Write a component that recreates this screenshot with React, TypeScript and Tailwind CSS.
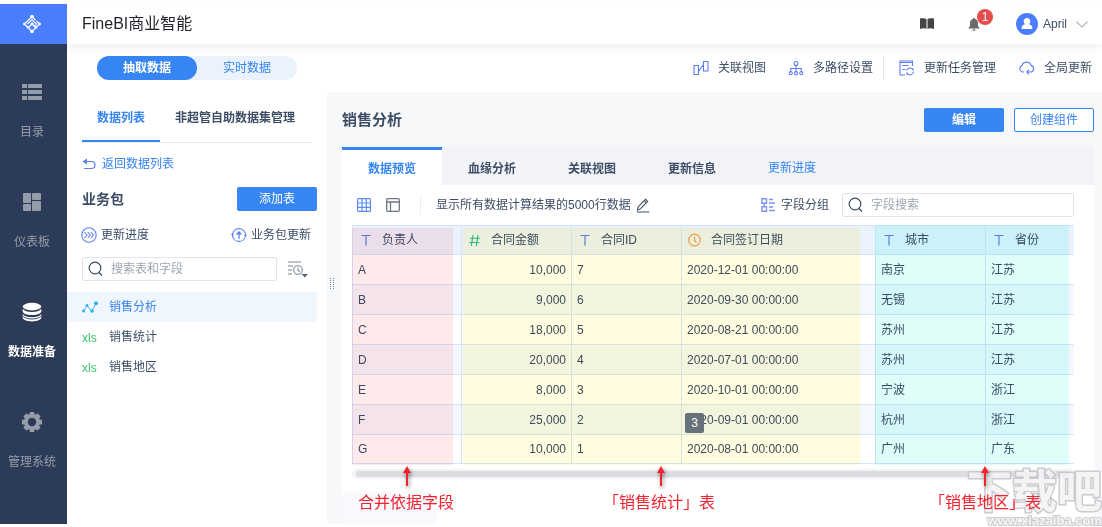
import type { ReactNode } from "react";

const navItems: { label: string; active?: boolean; icon: ReactNode }[] = [
  {
    label: "目录",
    icon: (
      <svg width="20" height="20" viewBox="0 0 20 20" fill="currentColor" aria-hidden="true">
        <path d="M0 2h5v4H0zM6 2h14v4H6zM0 8h5v4H0zM6 8h14v4H6zM0 14h5v4H0zM6 14h14v4H6z" />
      </svg>
    ),
  },
  {
    label: "仪表板",
    icon: (
      <svg width="20" height="20" viewBox="0 0 20 20" fill="currentColor" aria-hidden="true">
        <rect x="1" y="1" width="8" height="10" rx="1" />
        <rect x="10" y="1" width="9" height="7" rx="1" />
        <rect x="1" y="12" width="8" height="7" rx="1" />
        <rect x="10" y="9" width="9" height="10" rx="1" />
      </svg>
    ),
  },
  {
    label: "数据准备",
    active: true,
    icon: (
      <svg width="20" height="20" viewBox="0 0 20 20" fill="currentColor" aria-hidden="true">
        <ellipse cx="10" cy="4.6" rx="9.3" ry="3.8" />
        <path d="M.7 6.8c1.5 2.3 5 3.2 9.3 3.2s7.800-.9 9.300-3.200v2.500c0 2.200-4.200 3.800-9.300 3.800S.7 11.500.7 9.300z" />
        <path d="M.7 12c1.500 2.300 5 3.200 9.300 3.200s7.800-.9 9.300-3.200v3.500c0 2.200-4.200 3.900-9.300 3.900S.7 17.700.7 15.500z" />
        <path d="M1 14.200c2 2 5 2.800 9 2.800s7-.8 9-2.800" fill="none" stroke="#2c3b57" strokeWidth=".9" />
      </svg>
    ),
  },
  {
    label: "管理系统",
    icon: (
      <svg width="20" height="20" viewBox="0 0 20 20" aria-hidden="true">
        <g fill="currentColor">
          <circle cx="10" cy="10" r="8" />
          {[0, 45, 90, 135].map((a) => (
            <rect key={a} x="7.500" y="0" width="5" height="20" rx="1.200" transform={`rotate(${a} 10 10)`} />
          ))}
        </g>
        <circle cx="10" cy="10" r="4.200" fill="#2c3b57" />
      </svg>
    ),
  },
];

function SearchIcon() {
  return (
    <svg width="16" height="16" viewBox="0 0 16 16" fill="none" stroke="#3d4d66" strokeWidth="1.200" aria-hidden="true">
      <circle cx="7" cy="7" r="5.800" />
      <path d="M11 11.500l3 3" />
    </svg>
  );
}

function TextType() {
  return (
    <svg width="14" height="14" viewBox="0 0 14 14" fill="none" stroke="#5b7ff0" strokeWidth="1.200" aria-hidden="true">
      <path d="M2.500 2.500h9M7 2.500v10" />
    </svg>
  );
}

function NumberType() {
  return (
    <svg width="14" height="14" viewBox="0 0 14 14" fill="none" stroke="#2fb886" strokeWidth="1.100" aria-hidden="true">
      <path d="M5 2L3.300 13M10 2L8.300 13M2 5.200h10M1.300 9.500h10" />
    </svg>
  );
}

function DateType() {
  return (
    <svg width="14" height="14" viewBox="0 0 14 14" fill="none" stroke="#f5a04c" strokeWidth="1.200" aria-hidden="true">
      <circle cx="6.500" cy="7" r="5.800" />
      <path d="M6.500 3.500V7.500l2 2" />
    </svg>
  );
}

const columns: { label: string; icon: ReactNode; width: string }[] = [
  { label: "负责人", icon: <TextType />, width: "w-[109px]" },
  { label: "合同金额", icon: <NumberType />, width: "w-[110px]" },
  { label: "合同ID", icon: <TextType />, width: "w-[110px]" },
  { label: "合同签订日期", icon: <DateType />, width: "w-[194px]" },
  { label: "城市", icon: <TextType />, width: "w-[110px]" },
  { label: "省份", icon: <TextType />, width: "" },
];

const rows = [
  ["A", "10,000", "7", "2020-12-01 00:00:00", "南京", "江苏"],
  ["B", "9,000", "6", "2020-09-30 00:00:00", "无锡", "江苏"],
  ["C", "18,000", "5", "2020-08-21 00:00:00", "苏州", "江苏"],
  ["D", "20,000", "4", "2020-07-01 00:00:00", "苏州", "江苏"],
  ["E", "8,000", "3", "2020-10-01 00:00:00", "宁波", "浙江"],
  ["F", "25,000", "2", "2020-09-01 00:00:00", "杭州", "浙江"],
  ["G", "10,000", "1", "2020-08-01 00:00:00", "广州", "广东"],
];

function Callout({ text, place, arrow }: { text: string; place: string; arrow: string }) {
  return (
    <>
      <svg
        className={`absolute top-[241px] z-10 drop-shadow-[1px_2px_2px_rgba(0,0,0,0.5)] ${arrow}`}
        width="8"
        height="20"
        viewBox="0 0 8 20"
        fill="#f5222d"
        aria-hidden="true"
      >
        <path d="M4 0l4 7H5v13H3V7H0z" />
      </svg>
      <span className={`absolute top-[266px] z-10 text-base leading-6 whitespace-nowrap text-[#f5222d] ${place}`}>{text}</span>
    </>
  );
}

function Sidebar() {
  return (
    <nav className="flex w-[67px] shrink-0 flex-col bg-[#2c3b57]">
      <a href="#home" aria-label="FineBI" className="flex h-10 items-center justify-center bg-[#4b7eff] pr-[3px]">
        <svg width="20" height="20" viewBox="0 0 20 20" aria-hidden="true">
          <g fill="none" stroke="#fff" strokeWidth="1.100">
            <path d="M10 2.500L2.500 10l3 3M10 2.500l3.500 3.500M17.500 10L10 17.500 7 14.500M17.500 10l-3-3M5.500 10L10 5.500l4.500 4.500L12 12.500M10 10l-3.500 3.500M10 10l3.500 3.500" />
          </g>
          <g fill="#fff">
            <circle cx="10" cy="2.500" r="1.700" />
            <circle cx="10" cy="17.500" r="1.700" />
            <circle cx="2.500" cy="10" r="1.400" />
            <circle cx="17.500" cy="10" r="1.400" />
            <circle cx="10" cy="9.800" r="1.500" />
            <circle cx="6" cy="13.500" r="1.200" />
            <circle cx="14" cy="13.500" r="1.200" />
          </g>
        </svg>
      </a>
      {navItems.map((item) => (
        <a
          key={item.label}
          href={`#${item.label}`}
          className={`flex h-[110px] flex-col items-center gap-5 pt-[38px] pr-[3px] leading-5 whitespace-nowrap ${
            item.active ? "font-bold text-white" : "text-[#969daa]"
          }`}
        >
          {item.icon}
          {item.label}
        </a>
      ))}
    </nav>
  );
}

function Header() {
  return (
    <header className="relative z-10 flex h-10 items-center bg-white pr-[14px] pl-[15px] shadow-[0_4px_8px_rgba(60,90,80,0.08)]">
      <h1 className="grow text-base leading-6 text-[#1f2329]">FineBI商业智能</h1>
      <button aria-label="帮助文档" className="mr-[34px]">
        <svg width="14" height="12" viewBox="0 0 14 12" fill="#444" aria-hidden="true">
          <path d="M0 .5C2.500 0 5 0 6.500 1v10C5 10 2.500 10 0 11zM14 .5C11.500 0 9 0 7.500 1v10c1.500-1 4-1 6.500 0z" />
        </svg>
      </button>
      <button aria-label="消息" className="relative mr-9">
        <svg width="12" height="13" viewBox="0 0 12 13" fill="#6b6b6b" aria-hidden="true">
          <path d="M6 0c.6 0 1 .4 1 1 2 .5 3 2 3 4v3l1.500 2v.6H.5V10L2 8V5c0-2 1-3.500 3-4 0-.6.400-1 1-1zM4.500 11.200h3a1.500 1.500 0 01-3 0z" />
        </svg>
        <span className="absolute -top-[9px] left-[9px] flex size-4 items-center justify-center rounded-full bg-[#e64c4c] text-xs text-white">1</span>
      </button>
      <button className="flex items-center gap-[5px] text-[#3d4d66]">
        <svg width="22" height="22" viewBox="0 0 22 22" aria-hidden="true">
          <circle cx="11" cy="11" r="11" fill="#4b7eff" />
          <path d="M11 5c2 0 3.300 1.400 3.300 3.300 0 1.300-.6 2.300-1.300 3 2 .6 3.300 1.500 3.300 3.200V16H5.700v-1.500c0-1.700 1.300-2.600 3.300-3.200-.7-.7-1.300-1.700-1.300-3C7.700 6.400 9 5 11 5z" fill="#fff" />
        </svg>
        April
        <svg className="ml-1" width="12" height="7" viewBox="0 0 12 7" fill="none" stroke="#b5b8bd" strokeWidth="1.200" aria-hidden="true">
          <path d="M.5 .8l5.500 5.200L11.500 .8" />
        </svg>
      </button>
    </header>
  );
}

function ActionBar() {
  return (
    <div className="flex h-12 items-center pr-[10px] pl-[30px] text-[#3d4d66]">
      <div className="flex h-6 w-[200px] rounded-full bg-[#eaf2fe]">
        <button className="w-1/2 rounded-full bg-[#3685f2] font-bold text-white">抽取数据</button>
        <button className="w-1/2 text-[#3685f2]">实时数据</button>
      </div>
      <div className="flex grow items-center justify-end whitespace-nowrap">
        <button className="flex items-center gap-[9px]">
          <svg width="16" height="16" viewBox="0 0 16 16" fill="none" stroke="#5b7ff0" strokeWidth="1.100" aria-hidden="true">
            <path d="M1 5.500h4.500v9H1zM10.500 1.500H15V11h-4.500zM5.500 11.500l5-7" />
          </svg>
          关联视图
        </button>
        <button className="ml-[22px] flex items-center gap-[9px]">
          <svg width="16" height="16" viewBox="0 0 16 16" fill="none" stroke="#5b7ff0" strokeWidth="1.100" aria-hidden="true">
            <circle cx="8" cy="3.500" r="2" />
            <path d="M8 5.500v6M2.700 11.500V8.500h10.600v3" />
            <circle cx="2.700" cy="13.200" r="1.600" />
            <circle cx="8" cy="13.200" r="1.600" />
            <circle cx="13.300" cy="13.200" r="1.600" />
          </svg>
          多路径设置
        </button>
        <span className="mx-[10px] h-6 border-l border-[#e3e5e9]" />
        <button className="ml-1 flex items-center gap-[9px]">
          <svg width="17" height="16" viewBox="0 0 17 16" fill="none" stroke="#5b7ff0" strokeWidth="1.100" aria-hidden="true">
            <path d="M14.500 6V1H2v14h5M2 2.500h12.500M4.500 5.500h6M4.500 9.500H7" />
            <path d="M8.500 10.500a3.600 3.600 0 016.500-.8v-1.500M15.500 12a3.600 3.600 0 01-6.500 1.300v1.700" />
          </svg>
          更新任务管理
        </button>
        <button className="ml-[23px] flex items-center gap-[9px]">
          <svg width="16" height="16" viewBox="0 0 16 16" fill="none" stroke="#5b7ff0" strokeWidth="1.100" aria-hidden="true">
            <path d="M5 12H3.700A3.400 3.400 0 013 5.500 4.800 4.800 0 0112.200 5.600 3.300 3.300 0 0112 12H8M10 9.700L7.800 12l2.200 2.300" />
          </svg>
          全局更新
        </button>
      </div>
    </div>
  );
}

function XlsIcon() {
  return <span className="w-4 pt-[2px] text-xs leading-3 text-[#3fc46f]">xls</span>;
}

function LeftPanel() {
  const tables: { name: string; icon: ReactNode; active?: boolean }[] = [
    {
      name: "销售分析",
      active: true,
      icon: (
        <svg width="16" height="12" viewBox="0 0 16 12" aria-hidden="true">
          <path d="M1.500 10l3.500-5 5 5L14.200 2" fill="none" stroke="#3fb2ec" strokeWidth="1" />
          <g fill="#2cb5e8">
            <circle cx="1.500" cy="10" r="1.500" />
            <circle cx="5" cy="4.500" r="1.500" />
            <circle cx="10" cy="10" r="1.800" />
            <circle cx="14" cy="2.200" r="2" />
          </g>
        </svg>
      ),
    },
    { name: "销售统计", icon: <XlsIcon /> },
    { name: "销售地区", icon: <XlsIcon /> },
  ];
  return (
    <aside className="flex w-[260px] shrink-0 flex-col pr-[10px] text-[#3d4d66]">
      <div className="mr-[5px] ml-[15px] flex h-[51px] border-b border-[#e8eaed] font-bold whitespace-nowrap">
        <button className="h-[50px] border-b-2 border-[#3685f2] px-[15px] pt-1 text-[#3685f2]">数据列表</button>
        <button className="h-[50px] pt-[2px] pl-[15px]">非超管自助数据集管理</button>
      </div>
      <a href="#back" className="mt-[11px] flex items-center gap-[6px] pl-[15px] leading-5 text-[#3685f2]">
        <svg width="14" height="12" viewBox="0 0 14 12" fill="none" stroke="#5b7ff0" strokeWidth="1.200" aria-hidden="true">
          <path d="M1.500 3.500H9.500a3.400 3.400 0 010 7H2M1.500 3.500h4" />
          <path d="M5 .5v6L.5 3.500z" fill="#5b7ff0" stroke="none" />
        </svg>
        返回数据列表
      </a>
      <div className="mt-[13px] flex items-center justify-between pl-[15px]">
        <h2 className="text-sm font-bold">业务包</h2>
        <button className="h-6 w-20 rounded-[2px] bg-[#3685f2] text-white">添加表</button>
      </div>
      <div className="mt-[14px] flex items-center justify-between pr-[6px] pl-[14px] leading-5">
        <button className="flex items-center gap-1">
          <svg width="16" height="16" viewBox="0 0 16 16" fill="none" stroke="#5b7ff0" strokeWidth="1.100" aria-hidden="true">
            <circle cx="8" cy="8" r="7.200" />
            <path d="M3.500 5L6 8l-2.500 3M6.700 5l2.500 3-2.500 3M9.900 5l2.500 3-2.500 3" />
          </svg>
          更新进度
        </button>
        <button className="flex items-center gap-1">
          <svg width="16" height="16" viewBox="0 0 16 16" fill="none" stroke="#5b7ff0" strokeWidth="1.200" aria-hidden="true">
            <path d="M1.500 7A6.600 6.600 0 0114.500 7M14.500 9A6.600 6.600 0 011.500 9M8 12V5" />
            <path d="M4.700 7.500L8 4l3.300 3.500zM0 7h3L1.500 9.500zM13 9h3l-1.500-2.500z" fill="#5b7ff0" stroke="none" />
          </svg>
          业务包更新
        </button>
      </div>
      <div className="mt-3 flex items-center gap-[11px] pr-[9px] pl-[15px]">
        <label className="flex h-6 min-w-0 grow items-center gap-[7px] rounded-[2px] border border-[#e0e3e8] pl-[5px]">
          <SearchIcon />
          <input aria-label="搜索表和字段" placeholder="搜索表和字段" className="min-w-0 grow outline-none placeholder:text-[#9ea6b2]" />
        </label>
        <button aria-label="排序">
          <svg width="20" height="18" viewBox="0 0 20 18" fill="none" stroke="#7d8898" strokeWidth="1.100" aria-hidden="true">
            <path d="M0 2h13M0 6h5M0 10h4M0 14h4" />
            <circle cx="10" cy="10" r="4.300" />
            <path d="M10 7.500v3l2 1" />
            <path d="M13.500 14h6.500l-3.200 3.500z" fill="#5b6675" stroke="none" />
          </svg>
        </button>
      </div>
      <ul className="mt-[11px]">
        {tables.map((t) => (
          <li key={t.name}>
            <a
              href={`#${t.name}`}
              className={`flex h-[30px] items-center gap-[11px] pl-[15px] ${t.active ? "bg-[#f0f6fe] text-[#3685f2]" : ""}`}
            >
              {t.icon}
              {t.name}
            </a>
          </li>
        ))}
      </ul>
    </aside>
  );
}

function DataTable() {
  return (
    <div className="relative mx-[10px] mr-5">
      <table className="w-full table-fixed border-separate border-spacing-0">
        <thead>
          <tr className="h-[29px] bg-[#eaf2fe]">
            {columns.map((c) => (
              <th key={c.label} scope="col" className={`border-t border-l border-[#d6e4fa] p-0 font-normal ${c.width}`}>
                <span className="flex items-center gap-[9px] pl-[6px] whitespace-nowrap">
                  {c.icon}
                  {c.label}
                </span>
              </th>
            ))}
          </tr>
        </thead>
        <tbody>
          {rows.map((r, i) => (
            <tr key={r[0]} className={i % 2 ? "h-[30px] bg-[#f4f8fe]" : "h-[30px]"}>
              {r.map((v, j) => (
                <td
                  key={j}
                  className={`border-t border-l border-[#d6e4fa] px-[5px] py-0 whitespace-nowrap ${j === 1 ? "text-right" : ""} ${
                    i === rows.length - 1 ? "border-b" : ""
                  }`}
                >
                  {v}
                </td>
              ))}
            </tr>
          ))}
        </tbody>
      </table>
      <div className="mt-[5px] h-[10px] rounded-full bg-[#f2f3f5] px-1 py-[2px]">
        <div className="h-[6px] rounded-full bg-[#dcdde1]" />
      </div>

      <div className="pointer-events-none absolute top-[3px] left-0 h-[237px] w-[101px] bg-[#ffeaeb] mix-blend-multiply" />
      <div className="pointer-events-none absolute top-[3px] left-[111px] h-[237px] w-[397px] bg-[#fffcdf] mix-blend-multiply" />
      <div className="pointer-events-none absolute top-0 right-[5px] left-[523px] h-[240px] bg-[#dffefa] mix-blend-multiply" />
      <span className="absolute top-[188px] left-[333px] flex h-5 w-[19px] items-center justify-center rounded-[2px] bg-[#66717a] text-white">3</span>

      <Callout text="合并依据字段" place="left-[6px]" arrow="left-[51px]" />
      <Callout text="「销售统计」表" place="left-[251px]" arrow="left-[305px]" />
      <Callout text="「销售地区」表" place="left-[577px]" arrow="left-[629px]" />
    </div>
  );
}

function MainPanel() {
  const tabs = ["血缘分析", "关联视图", "更新信息"];
  return (
    <main className="flex min-w-0 grow flex-col pr-2">
      <div className="flex h-[55px] gap-[10px] pt-4">
        <h2 className="grow text-[15px] leading-6 font-bold">销售分析</h2>
        <button className="h-6 w-20 rounded-[2px] bg-[#3685f2] font-bold text-white">编辑</button>
        <button className="h-6 w-20 rounded-[2px] border border-[#3685f2] bg-white text-[#3685f2]">创建组件</button>
      </div>
      <div className="flex grow flex-col bg-white">
        <div className="flex h-[38px] bg-[#f2f3f7] font-bold">
          <button className="w-[100px] border-t-3 border-[#3685f2] bg-white pt-[2px] text-[#3685f2]">数据预览</button>
          {tabs.map((t) => (
            <button key={t} className="w-[100px] pt-[5px]">
              {t}
            </button>
          ))}
          <button className="w-[100px] pt-1 font-normal text-[#3685f2]">更新进度</button>
        </div>
        <div className="flex h-10 items-center pr-5 pl-[15px] whitespace-nowrap">
          <button aria-label="表格视图">
            <svg width="14" height="14" viewBox="0 0 14 14" fill="none" stroke="#5b8def" strokeWidth="1.200" aria-hidden="true">
              <rect x=".6" y=".6" width="12.800" height="12.800" rx="1" />
              <path d="M5 .5v13M9.300 .5v13M.5 5h13M.5 9.300h13" />
            </svg>
          </button>
          <button aria-label="结构视图" className="ml-[15px]">
            <svg width="14" height="14" viewBox="0 0 14 14" fill="none" stroke="#6f7784" strokeWidth="1.300" aria-hidden="true">
              <rect x=".7" y=".7" width="12.600" height="12.600" rx="1" />
              <path d="M.5 4h13M4.500 4v9.500" />
            </svg>
          </button>
          <span className="mr-[15px] ml-5 h-5 border-l border-[#eceef2]" />
          <span>显示所有数据计算结果的5000行数据</span>
          <span className="ml-[5px] grow">
            <button aria-label="编辑行数" className="block">
              <svg width="14" height="15" viewBox="0 0 14 15" fill="none" stroke="#3d4d66" strokeWidth="1.100" aria-hidden="true">
                <path d="M1.500 12l.8-3.300L9.500 1.300l2.200 2.200-7.300 7.400zM8.200 2.700l2.200 2.200M.8 14h12.500" />
              </svg>
            </button>
          </span>
          <button className="mr-[13px] flex items-center gap-[6px]">
            <svg width="14" height="14" viewBox="0 0 14 14" fill="none" stroke="#7d93f2" strokeWidth="1.400" aria-hidden="true">
              <path d="M1 .8h4.500v4.500H1zM1 8.700h4.500v4.500H1zM3.200 5.300v3.400M8 1.500h4M8 5h6M8 9h4M8 12.500h6" />
            </svg>
            字段分组
          </button>
          <label className="flex h-6 w-[232px] items-center gap-[7px] rounded-[2px] border border-[#e0e3e8] bg-white pl-[5px]">
            <SearchIcon />
            <input aria-label="字段搜索" placeholder="字段搜索" className="min-w-0 grow outline-none placeholder:text-[#9ea6b2]" />
          </label>
        </div>
        <DataTable />
        <div className="mt-[13px] w-[95px] grow bg-[#f9fafd]" />
      </div>
    </main>
  );
}

export default function App() {
  return (
    <div className="relative flex min-h-screen overflow-hidden bg-white pt-1 pb-[3px] font-['Liberation_Sans','Noto_Sans_CJK_SC',sans-serif] text-xs text-[#3d4d66]">
      <Sidebar />
      <div className="flex min-w-0 grow flex-col">
        <Header />
        <ActionBar />
        <div className="flex grow">
          <LeftPanel />
          <div className="flex min-w-0 grow bg-[#f7f8fa]">
            <div className="flex w-[15px] shrink-0 items-center">
              <svg className="mb-12 ml-[3px]" width="4" height="12" viewBox="0 0 4 12" fill="#7c838e" aria-hidden="true">
                {[0, 2, 4, 6, 8, 10].map((y) => (
                  <path key={y} d={`M0 ${y}h1v1H0zM3 ${y}h1v1H3z`} />
                ))}
              </svg>
            </div>
            <MainPanel />
          </div>
        </div>
      </div>
      <div className="pointer-events-none absolute right-0 bottom-0 flex flex-col items-end font-bold text-[#f4f4f5] opacity-85 [paint-order:stroke]">
        <span className="text-[45px] leading-[44px] [-webkit-text-stroke:3px_#c2c4c8]">下载吧</span>
        <span className="text-[13px] leading-3 [-webkit-text-stroke:2px_#c2c4c8]">www.xiazaiba.com</span>
      </div>
    </div>
  );
}
